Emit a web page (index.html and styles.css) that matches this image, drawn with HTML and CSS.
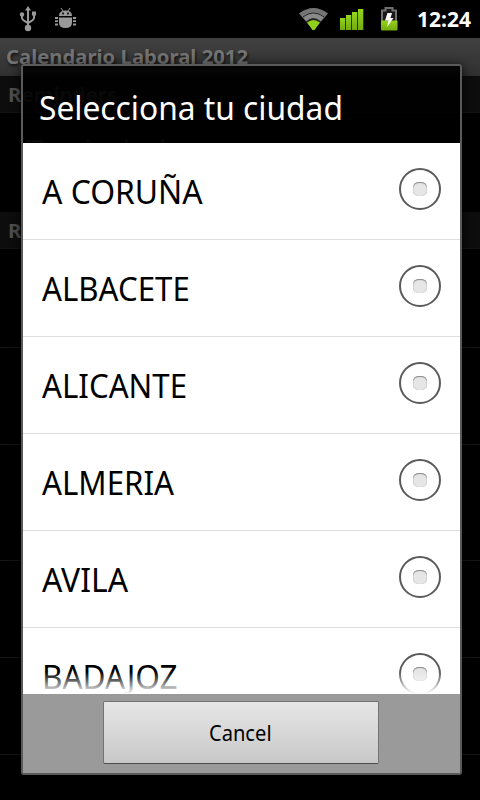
FILE: index.html
```
<!DOCTYPE html>
<html lang="es">
<head>
<meta charset="utf-8">
<title>Calendario Laboral 2012</title>
<link rel="stylesheet" href="styles.css">
</head>
<body>
<div class="screen">
  <header class="status">
    <svg width="480" height="38" viewBox="0 0 480 38">
      <g fill="none" stroke="#999" stroke-width="2">
        <path d="M28 9v18M22 15v3q0 2 6 5M34 14v4q0 2-6 5"/>
      </g>
      <g fill="#999"><path d="M28 6l3 4.500h-6z"/><circle cx="22" cy="14.500" r="2.200"/><path d="M32 11.500h4v4h-4z"/><circle cx="28" cy="28" r="3.200"/></g>
      <g fill="#999">
        <path d="M59 16q0-5.500 6.500-5.500T72 16z"/><path d="M59 17.500h13v5q0 5.500-6.500 5.500T59 22.500z"/>
        <path d="M55 17h3v2h-3zM55 20.200h3v1.800h-3zM55 23.500h3v2h-3zM73 17h3v2h-3zM73 20.200h3v1.800h-3zM73 23.500h3v2h-3z"/>
        <path d="M61 8l2 3M70 8l-2 3" stroke="#999"/>
        <path d="M62 12.500h2v2h-2zM67 12.500h2v2h-2z" fill="#222"/>
      </g>
      <path d="M299 13.500Q313.500 2.500 328 13.500L313.500 30z" fill="#747474"/>
      <path d="M303 17Q313.500 9 324 17" fill="none" stroke="#222" stroke-width="1"/>
      <path d="M303.500 17.500Q313.500 10 323.500 17.500L313.500 30z" fill="#8a8a8a"/>
      <path d="M306 21.500Q313.500 14.500 321 21.500L313.500 30.500z" fill="#222"/>
      <path d="M307 22.500Q313.500 17.500 320 22.500L314.500 30h-2z" fill="#8fd01c"/>
      <defs><linearGradient id="green" x1="0" y1="0" x2="0" y2="1"><stop offset="0" stop-color="#94d51c"/><stop offset="1" stop-color="#74aa10"/></linearGradient></defs>
      <g fill="url(#green)"><rect x="340" y="18" width="5.300" height="12"/><rect x="346" y="15" width="5.300" height="15"/><rect x="352" y="12" width="5.300" height="18"/><rect x="358" y="9" width="5.300" height="21"/></g>
      <path d="M382 21V10.500h3.500v-2.500h7v2.500h3.500V21" fill="#181818" stroke="#707070" stroke-width="2"/>
      <rect x="381" y="20.500" width="16.500" height="10" rx="1" fill="url(#green)"/>
      <path d="M387.500 13h4.500l-1.500 5h3l-6.500 9 1.500-6.500h-3.500z" fill="#fff"/>
    </svg>
    <span class="clock">12:24</span>
  </header>
  <div class="app-title">Calendario Laboral 2012</div>
  <div class="section">Reminders</div>
  <div class="pref pref-city">Tu ciudad</div>
  <div class="section">Reminders</div>
  <div class="pref"></div>
  <div class="pref"></div>
  <div class="pref pref-tall"></div>
  <div class="pref"></div>
  <div class="pref"></div>

  <div class="dialog">
    <h1 class="dialog-title"><span>Selecciona tu ciudad</span></h1>
    <ul class="cities">
      <li><span class="coruna">A CORUÑA</span><i class="radio"></i></li>
      <li><span>ALBACETE</span><i class="radio"></i></li>
      <li><span>ALICANTE</span><i class="radio"></i></li>
      <li><span>ALMERIA</span><i class="radio"></i></li>
      <li><span class="avila">AVILA</span><i class="radio"></i></li>
      <li><span class="badajoz">BADAJOZ</span><i class="radio"></i></li>
    </ul>
    <div class="actions"><button class="cancel"><span>Cancel</span></button></div>
  </div>
</div>
</body>
</html>
```
FILE: styles.css
```
* { box-sizing: border-box; }
body { margin: 0; background: #000; font-family: "Noto Sans", "Open Sans", sans-serif; }
.screen { position: relative; width: 480px; height: 800px; overflow: hidden; background: #000; }
.status { display: flex; align-items: center; height: 38px; position: relative; }
.status svg { flex: none; }
.clock { position: absolute; right: 9px; top: 5px; color: #fff; font-size: 21px; line-height: 28px; font-weight: 700; }
.app-title { height: 38px; padding-left: 6px; background: linear-gradient(#414141, #303030); color: #747474; font-size: 20.3px; line-height: 37px; font-weight: 700; text-shadow: 1px 2px 3px #111; }
.section { height: 37px; padding-left: 8px; background: #0d0d0d; border-bottom: 1px solid #151515; color: #505050; font-size: 20.4px; line-height: 37px; font-weight: 700; }
.pref { height: 97px; border-bottom: 1px solid #161616; }
.pref-city { height: 99px; border: 0; padding: 10px 0 0 26px; color: #606060; font-size: 31px; line-height: 54px; }
.section + .pref:not(.pref-city) { height: 99px; }
.pref + .pref-tall { height: 116px; }
.dialog { position: absolute; left: 21px; top: 64px; width: 441px; height: 711px; display: flex; flex-direction: column; border: 2px solid #5a5a5a; border-radius: 3px; box-shadow: 0 2px 12px rgba(0,0,0,.8); }
.dialog-title { flex: none; height: 77px; margin: 0; padding-left: 16px; background: rgba(0,0,0,.9); color: #fff; font-size: 33px; line-height: 84px; font-weight: 400; white-space: nowrap; }
.dialog-title span { transform: scaleX(.961); }
.cities { position: relative; height: 551px; margin: 0; padding: 0; overflow: hidden; list-style: none; background: #fff; }
.cities::after { content: ""; position: absolute; left: 0; right: 0; bottom: 0; height: 22px; background: linear-gradient(rgba(255,255,255,0), #fff); }
.cities li { display: flex; justify-content: space-between; align-items: flex-start; height: 97px; padding: 25px 19px 0; border-bottom: 1px solid #dedede; color: #000; font-size: 33.500px; line-height: 47px; white-space: nowrap; }
.cities span { transform: scaleX(.932); }
.cities .coruna, .cities .avila { transform: scaleX(.951); }
.cities .badajoz { transform: scaleX(.94); }
.radio { flex: none; width: 42px; height: 42px; border: 2px solid #5b5b5d; border-radius: 50%; display: flex; align-items: center; justify-content: center; }
.radio::before { content: ""; width: 14px; height: 14px; border-radius: 5.500px; background: #e6e6e6; box-shadow: inset 0 1px 1px #888, inset 0 0 1px #aaa; }
.actions { display: flex; justify-content: center; height: 79px; padding-top: 7px; background: #9a9a9a; }
.cancel { width: 276px; height: 63px; margin-right: 1px; padding: 0 2px 2px 0; border: 1px solid #747474; border-bottom-color: #4c4c4c; border-radius: 2px; background: linear-gradient(#e6e6e6, #c8c8c8); color: #000; font-family: inherit; font-size: 22px; }
.dialog span { display: inline-block; transform-origin: left center; }
.dialog .cancel span { transform-origin: center; transform: scaleX(.915); }
```
